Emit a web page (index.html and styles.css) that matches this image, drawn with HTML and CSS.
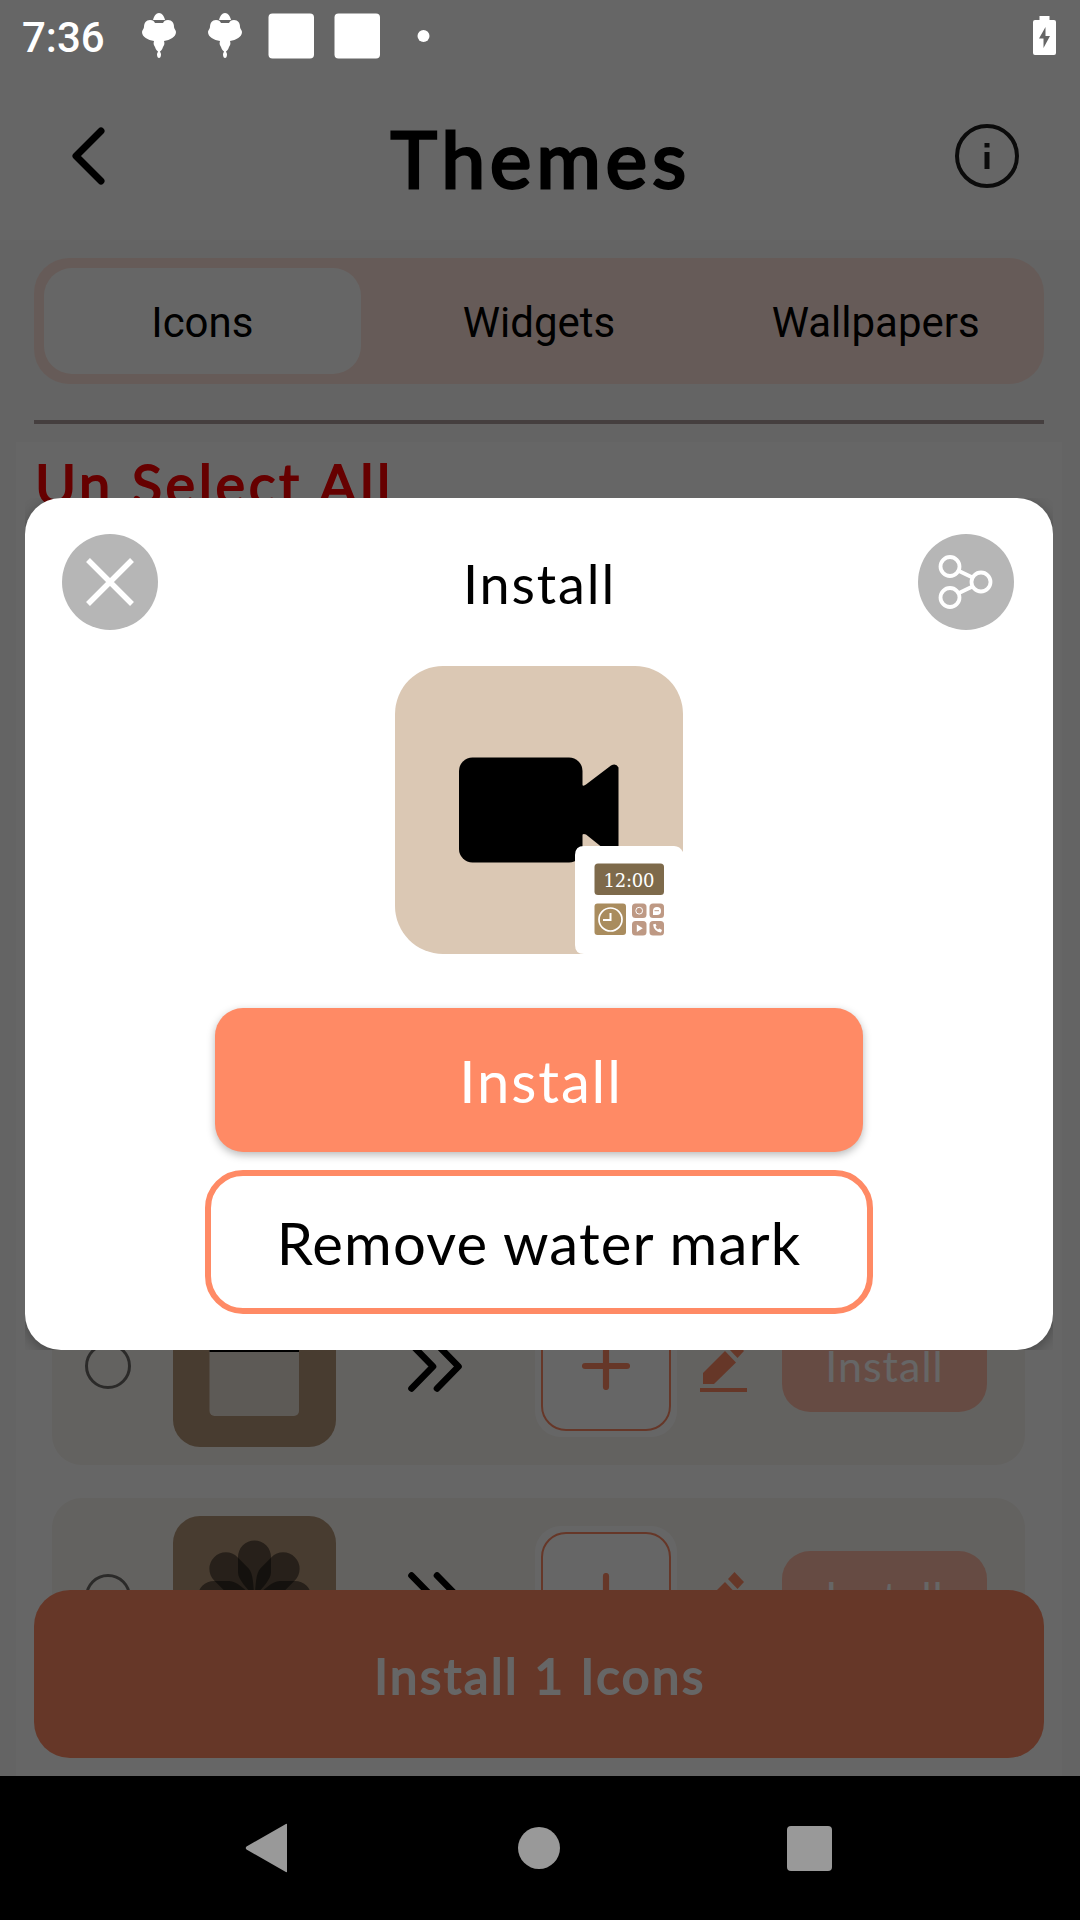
FILE: index.html
```html
<!DOCTYPE html>
<html lang="en">
<head>
<meta charset="utf-8">
<title>Themes</title>
<link rel="stylesheet" href="styles.css">
</head>
<body>
<svg width="0" height="0" class="defs" aria-hidden="true">
  <defs>
    <g id="balloon">
      <path d="M17 0c3 0 5 3 6 7H11c1-4 3-7 6-7z"/>
      <path d="M8 7c3 0 4 1 5 3h8c1-2 2-3 5-3 4 0 6 3 6 7 0 2 2 3 2 5 0 5-6 8-12 9 1 3 0 4-1 6-1 3-2 4-4 5-2-1-3-2-4-5-1-2-2-3-1-6C6 27 0 24 0 19c0-2 2-3 2-5 0-4 2-7 6-7z"/>
      <path d="M17 36l2 5c0 3-1 4-2 4s-2-1-2-4z"/>
    </g>
    <path id="petal" d="M-16.5-40.5a16.5 16.5 0 0 1 33 0V-25C16.5-18 8-10 0 0C-8-10-16.5-18-16.5-25z"/>
    <g id="chevrons" fill="none" stroke="#000" stroke-width="6.6" stroke-linecap="round" stroke-linejoin="round">
      <path d="M3.5 3.5L25 25.500 3.500 47.500"/><path d="M29 3.500L50.500 25.500 29 47.500"/>
    </g>
    <g id="pencil" fill="#ff8a65">
      <path d="M3 44V33L25 11l11 11.500L14 44z"/>
      <path d="M28 8l6.500-7 9.500 10-6.500 7z"/>
      <path d="M0 48h47v4H0z"/>
    </g>
  </defs>
</svg>
<div class="screen">
  <header class="appbar">
    <svg class="back" width="40" height="64" viewBox="0 0 40 64"><path d="M33 7L8 32l25 25" fill="none" stroke="#000" stroke-width="7" stroke-linecap="round" stroke-linejoin="round"/></svg>
    <h1 class="appbar-title">Themes</h1>
    <svg class="info" width="66" height="66" viewBox="0 0 66 66"><circle cx="33" cy="33" r="30" fill="none" stroke="#1c1c1c" stroke-width="4"/><path d="M30.500 20h5v4.500h-5zM30.500 29h5v17h-5z" fill="#1c1c1c"/></svg>
  </header>
  <main class="content">
    <nav class="tabs">
      <div class="tab tab-active">Icons</div>
      <div class="tab">Widgets</div>
      <div class="tab">Wallpapers</div>
    </nav>
    <div class="divider"></div>
    <section class="panel">
      <div class="unselect">Un Select All</div>
      <div class="list">
        <div class="row">
          <div class="radio"></div>
          <svg class="tile" width="163" height="162" viewBox="0 0 163 162"><rect width="163" height="162" rx="27" fill="#b49678"/><rect x="36.500" y="34" width="89.500" height="97" rx="5" fill="#e9e1d8"/><path d="M36.500 50h89.500v17h-89.500z"/></svg>
          <svg class="chev" width="54" height="51"><use href="#chevrons"/></svg>
          <div class="add"><div class="add-box"><svg width="48" height="48"><path d="M24 3v42M3 24h42" stroke="#ff8a65" stroke-width="6.200" stroke-linecap="round"/></svg></div></div>
          <svg class="pencil" width="47" height="52"><use href="#pencil"/></svg>
          <div class="row-install">Install</div>
        </div>
        <div class="row">
          <div class="radio"></div>
          <svg class="tile" width="163" height="162" viewBox="0 0 163 162"><rect width="163" height="162" rx="27" fill="#b49678"/>
            <g transform="translate(81.500 81.500)" fill="#000" fill-opacity=".46">
              <use href="#petal"/><use href="#petal" transform="rotate(45)"/><use href="#petal" transform="rotate(90)"/><use href="#petal" transform="rotate(135)"/><use href="#petal" transform="rotate(180)"/><use href="#petal" transform="rotate(225)"/><use href="#petal" transform="rotate(270)"/><use href="#petal" transform="rotate(315)"/>
            </g></svg>
          <svg class="chev" width="54" height="51"><use href="#chevrons"/></svg>
          <div class="add"><div class="add-box"><svg width="48" height="48"><path d="M24 3v42M3 24h42" stroke="#ff8a65" stroke-width="6.200" stroke-linecap="round"/></svg></div></div>
          <svg class="pencil" width="47" height="52"><use href="#pencil"/></svg>
          <div class="row-install">Install</div>
        </div>
      </div>
    </section>
  </main>
  <div class="install-all">Install 1 Icons</div>

  <div class="scrim">
    <div class="dialog-clip">
      <div class="dialog">
        <div class="dialog-head">
          <svg width="96" height="96"><circle cx="48" cy="48" r="48" fill="#b6b6b6"/><path d="M26 26l44 44M70 26L26 70" stroke="#fff" stroke-width="5.500"/></svg>
          <h2 class="dialog-title">Install</h2>
          <svg width="96" height="96"><circle cx="48" cy="48" r="48" fill="#b6b6b6"/><g fill="none" stroke="#fff" stroke-width="3.800"><circle cx="32" cy="32.500" r="9.500"/><circle cx="63" cy="48" r="9.500"/><circle cx="32" cy="63.500" r="9.500"/><path d="M41 37l13.500 6.500M41 59l13.500-6.500"/></g></svg>
        </div>
        <svg class="preview" width="288" height="288" viewBox="0 0 288 288">
          <rect width="288" height="288" rx="48" fill="#dbc8b4"/>
          <rect x="64" y="91.500" width="123.500" height="105" rx="13.500"/>
          <path d="M186 118q2 3 5 0.500L216 99.500q5-3 7.500 2V187q-2.500 5-7.500 1.500L191 168.500q-3-1.500-5 1z"/>
          <path d="M180 288V189q0-9 9-9h90q6 0 9 6v102z" fill="#fff"/>
          <path d="M180 279q0 9 9 9h-9z" fill="#dbc8b4"/>
          <rect x="199.500" y="197.500" width="69.500" height="31.500" rx="3.500" fill="#7e6a4b"/>
          <text x="208.500" y="220.500" class="clock-text" textLength="51">12:00</text>
          <rect x="199.500" y="237.500" width="31.500" height="31.500" rx="3" fill="#a98c5e"/>
          <g fill="none" stroke="#fff"><circle cx="215.500" cy="253.500" r="11.500" stroke-width="1.700"/><path d="M215.500 247v7H208" stroke-width="2"/></g>
          <g fill="#be9984"><rect x="237" y="237.500" width="14.500" height="14.500" rx="3.500"/><rect x="254.500" y="237.500" width="14.500" height="14.500" rx="3.500"/><rect x="237" y="255" width="14.500" height="14.500" rx="3.500"/><rect x="254.500" y="255" width="14.500" height="14.500" rx="3.500"/></g>
          <circle cx="244.200" cy="244.700" r="3.400" fill="none" stroke="#fff"/>
          <path d="M258 249v-4a4 4 0 1 1 4 4z" fill="#fff"/><path d="M259.500 244.700h4.500" stroke="#be9984"/>
          <path d="M241.800 258.500l6 3.700-6 3.800z" fill="#fff"/>
          <path d="M258 258.500q1 7 8 8l1-2.500-2.500-1.500-1.500 1q-2-1-2.500-2.700l1-1-1-2z" fill="#fff"/>
        </svg>
        <div class="btn btn-primary">Install</div>
        <div class="btn btn-outline">Remove water mark</div>
      </div>
    </div>
  </div>

  <div class="statusbar">
    <span class="time">7:36</span>
    <svg class="status-icons" width="300" height="46" viewBox="0 0 300 46" fill="#fff">
      <use href="#balloon"/><use href="#balloon" x="66"/>
      <rect x="126.500" y=".5" width="45.500" height="45" rx="4"/><rect x="192.500" y=".5" width="45.500" height="45" rx="4"/>
      <circle cx="281.500" cy="23" r="6"/>
    </svg>
    <svg class="battery" width="23" height="39" viewBox="0 0 23 39"><path fill="#fff" fill-rule="evenodd" d="M6.500 0h10v4H21q2 0 2 2v31q0 2-2 2H2q-2 0-2-2V6q0-2 2-2h4.500zM12.500 11L6 22.500h4.500V32L17 20h-4.500z"/></svg>
  </div>
  <div class="navbar">
    <svg width="46" height="50"><path d="M42 1.500V48.500Q42 50 40 48.500L1.500 26.500Q0 25 1.500 23.500L40 1.500Q42 0 42 1.500z" fill="#999"/></svg>
    <svg width="42" height="42"><circle cx="21" cy="21" r="21" fill="#999"/></svg>
    <svg width="45" height="45"><rect width="45" height="45" rx="4" fill="#999"/></svg>
  </div>
</div>
</body>
</html>
```

FILE: styles.css
```css
* { box-sizing: border-box; }
body { margin: 0; font-family: Lato, "Noto Sans", sans-serif; color: #000; background: #000; stroke-linejoin: round; }
h1, h2 { margin: 0; }
svg { display: block; flex: none; stroke-linejoin: miter; }
.defs { position: absolute; }

.screen { position: relative; display: flex; flex-direction: column; width: 1080px; height: 1920px; overflow: hidden; background: #fff; }

.appbar { display: flex; justify-content: space-between; align-items: center; height: 240px; padding: 72px 60px 0 68px; }
.appbar-title { margin: 4px 0 0 20px; font-size: 78px; line-height: 96px; font-weight: 400; letter-spacing: 5.2px; -webkit-text-stroke: 3px #000; }

.content { display: flex; flex-direction: column; height: 1536px; padding: 18px 18px 0 16px; background: #fafafa; }
.tabs { display: grid; grid-template-columns: repeat(3, 1fr); gap: 20px; margin: 0 18px 0 18px; height: 126px; padding: 10px; border-radius: 35px; background: #ffe4dc; font: 42px/106px Roboto, sans-serif; text-align: center; }
.tab { height: 106px; padding-top: 2px; border-radius: 28px; }
.tab-active { background: #fff; }
.divider { flex: none; height: 4px; margin: 36px 18px 18px 18px; background: #ad9e9e; }

.panel { height: 1334px; padding: 0 37px 0 36px; overflow: hidden; background: #fff; }
.unselect { height: 825px; margin-left: -17px; padding-top: 6px; color: #f00; font-size: 56px; line-height: 72px; letter-spacing: 3.6px; -webkit-text-stroke: 1.800px #f00; }
.list { display: flex; flex-direction: column; gap: 33px; }
.row { display: flex; align-items: center; height: 198px; padding-left: 33px; border-radius: 30px; background: #f8f5f0; }
.radio { width: 46px; height: 46px; border: 3px solid #6c6a68; border-radius: 50%; }
.tile { margin-left: 41.500px; }
.chev { margin-left: 72px; }
.add { display: flex; justify-content: center; align-items: center; width: 142px; height: 142px; margin-left: 73px; border-radius: 26px; background: #fff; }
.add-box { display: flex; justify-content: center; align-items: center; width: 130px; height: 130px; border: 2.5px solid #ff8a65; border-radius: 25px; }
.pencil { margin: -1px 0 0 23px; }
.row-install { width: 205px; height: 92px; margin-left: 35px; padding-left: 1px; border-radius: 28px; background: #ffbca8; color: #fff; font-size: 43px; line-height: 92px; letter-spacing: 1px; text-align: center; }

.install-all { position: absolute; left: 34px; top: 1590px; width: 1010px; height: 168px; padding-left: 2px; border-radius: 36px; background: #ff8a65; color: #fff; font-size: 49px; line-height: 171px; letter-spacing: 2.600px; -webkit-text-stroke: 1.800px #fff; text-align: center; }

.scrim { position: absolute; inset: 0; background: rgba(0, 0, 0, .6); }
.dialog-clip { margin: 498px 27px 0 25px; height: 852px; overflow: hidden; }
.dialog { display: flex; flex-direction: column; align-items: center; height: 852px; padding-top: 36px; border-radius: 36px; background: #fff; box-shadow: 0 4px 14px rgba(0, 0, 0, .3); }
.dialog-head { display: flex; justify-content: space-between; align-items: center; width: 954px; height: 96px; padding-right: 2px; }
.dialog-title { margin: 4px 0 0 3px; font-size: 54px; line-height: 66px; font-weight: 400; letter-spacing: 1.900px; }
.preview { margin-top: 36px; }
.clock-text { fill: #fff; font: 18px "DejaVu Serif", serif; }
.btn { height: 144px; font-size: 58px; text-align: center; }
.btn-primary { width: 648px; margin-top: 54px; padding-left: 4px; border-radius: 28px; background: #ff8a65; color: #fff; line-height: 146px; letter-spacing: 1.900px; box-shadow: 0 3px 8px rgba(0, 0, 0, .28); }
.btn-outline { width: 668px; margin-top: 18px; border: 6px solid #ff8a65; border-radius: 38px; line-height: 134px; letter-spacing: 1.150px; }

.statusbar { position: absolute; left: 0; top: 0; display: flex; align-items: flex-start; width: 1080px; height: 72px; padding: 13px 24px 0 22px; color: #fff; font: 500 42px/49px Roboto, sans-serif; }
.time { width: 120px; }
.battery { margin: 3px 0 0 auto; }
.navbar { position: relative; display: flex; justify-content: space-between; align-items: center; height: 144px; padding: 0 248px 0 245px; background: #000; }
```
